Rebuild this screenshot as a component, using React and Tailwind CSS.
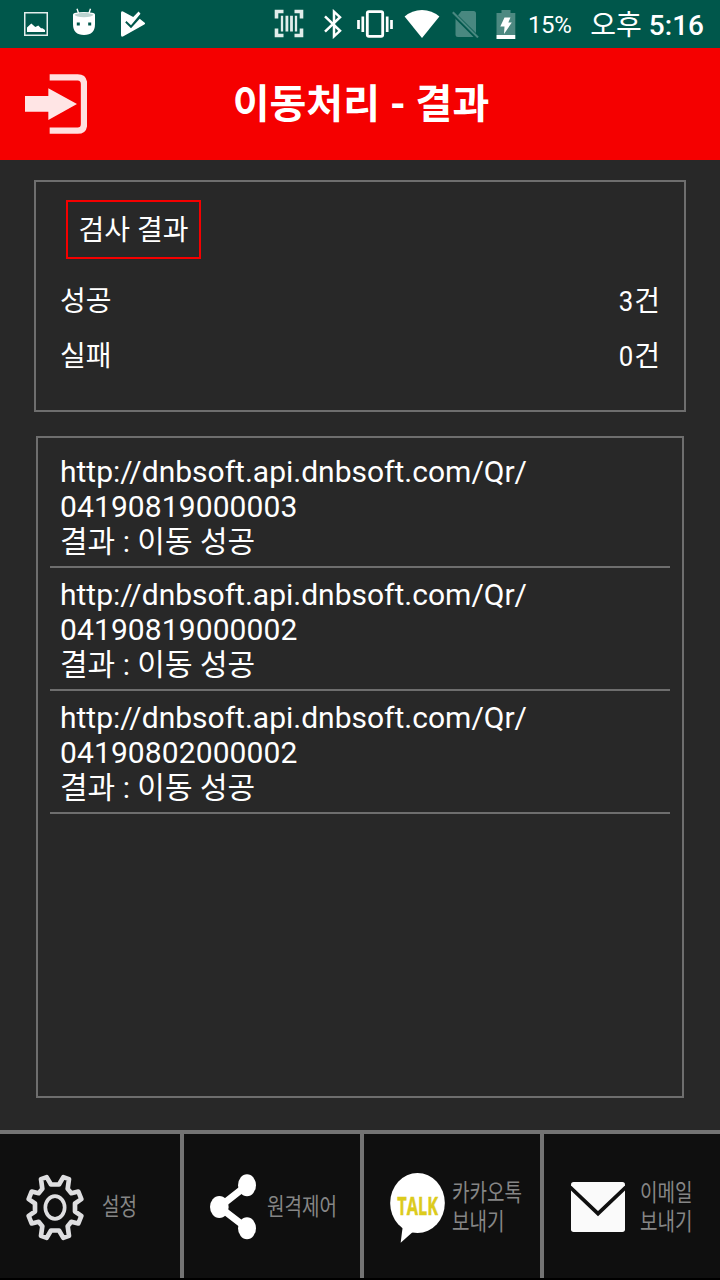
const results = [
  { url: 'http://dnbsoft.api.dnbsoft.com/Qr/', code: '04190819000003', message: '이동 성공' },
  { url: 'http://dnbsoft.api.dnbsoft.com/Qr/', code: '04190819000002', message: '이동 성공' },
  { url: 'http://dnbsoft.api.dnbsoft.com/Qr/', code: '04190802000002', message: '이동 성공' },
]

const summary = [
  { label: '성공', count: 3 },
  { label: '실패', count: 0 },
]

function StatusBar() {
  return (
    <div className="h-12 shrink-0 bg-[#00574b] text-white flex items-center">
      <svg className="ml-6 w-6 h-6 shrink-0" viewBox="0 0 24 24">
        <rect x="0.75" y="0.75" width="22.5" height="22.5" fill="none" stroke="#e3eeec" strokeWidth="1.5" />
        <path d="M3 20V15.5L7.3 11.5L11.3 15L14.3 13.4L17 16.3H18.5L21 18V20Z" fill="#fff" />
      </svg>
      <svg className="ml-6 mb-[5px] w-6 h-7 shrink-0" viewBox="0 0 24 28">
        <path d="M5 .8L6.8 6M18.5 .8L16.7 6" stroke="#fff" strokeWidth="1.4" />
        <path d="M1 7Q1 5 4 4.8Q12 3.4 20 4.8Q23 5 23 7V16Q23 27 12 27Q1 27 1 16Z" fill="#fff" />
        <path d="M2.5 6.5Q12 3 21.5 6.5Q20 9.3 12 9.3Q4 9.3 2.5 6.5Z" fill="#bcd3d0" />
        <path d="M4.8 14.4h3v3h-3zM16.2 14.4h3v3h-3z" fill="#00574b" />
      </svg>
      <svg className="ml-6 w-[26px] h-[26px] shrink-0" viewBox="0 0 26 26" fill="#fff">
        <path d="M1 2Q1 -.3 3 .6L13.2 6L18.6 .6L20.5 2.7L11 14.2L6.4 10L5.2 11.4L11 17.2L19.7 7.8L24.7 11.7Q25.6 12.6 24.3 13.6L3.4 25.3Q1 26.5 1 24Z" />
      </svg>

      <svg className="ml-[128px] w-[30px] h-[30px] shrink-0" viewBox="0 0 30 30" fill="none" stroke="#e0edea">
        <path d="M2.5 9.5V2.5H9.5M20.5 2.5H27.5V9.5M27.5 19.5V26.5H20.5M9.5 26.5H2.5V19.5" strokeWidth="3.6" />
        <path d="M8 6.8V22.5M22 6.8V22.5" strokeWidth="2.3" />
        <path d="M12.9 6.8V22.5M17.5 6.8V22.5" strokeWidth="2.8" />
      </svg>
      <svg className="ml-[20px] w-[18px] h-[30px] shrink-0" viewBox="0 0 18 30" fill="none" stroke="#fff" strokeWidth="2.5">
        <path d="M1 7.3L16 21.8L10 27.3V2.7L16 8.2L1 22.7" />
      </svg>
      <svg className="ml-[15px] w-[36px] h-[28px] shrink-0" viewBox="0 0 36 28">
        <rect x="10.3" y="1.7" width="15.4" height="24.6" rx="1.6" fill="none" stroke="#fff" strokeWidth="2.8" />
        <path d="M1.5 10V19M5.8 6.5V22M30.2 6.5V22M34.5 10V19" stroke="#fff" strokeWidth="2.7" />
      </svg>
      <svg className="ml-[11px] w-[36px] h-[28px] shrink-0" viewBox="0 0 36 28" fill="#fff">
        <path d="M18 28L.6 6.6Q8 0 18 0T35.4 6.6Z" />
      </svg>
      <svg className="ml-[12px] w-[27px] h-[28px] shrink-0" viewBox="0 0 27 28">
        <path d="M4 7.8L9.5 1H21.5Q24 1 24 3.5V24Q24 27 21 27H6Q3.5 27 3.5 24.5V8.5Z" fill="#498880" />
        <path d="M.4 2.8L25.8 28" stroke="#00574b" strokeWidth="4.5" />
        <path d="M.8 2.2L26 27.4" stroke="#498880" strokeWidth="2.1" />
      </svg>
      <svg className="ml-[17px] w-[20px] h-[29px] shrink-0" viewBox="0 0 20 29">
        <path d="M.5 3H5.5V0H14.5V3H19.3V25H.5Z" fill="#4d8981" />
        <path d="M.5 25H19.3V29H.5Z" fill="#fff" />
        <path d="M8.5 7.5H14.5L12.3 12.5H15.8L8 24L8.5 16.5H4.3Z" fill="#fff" />
      </svg>
      <span className="ml-[12px] pt-[2px] text-2xl leading-7 tracking-[-0.4px]">15%</span>
      <span className="ml-[19px] w-[120px] pt-[3px] text-[28px] leading-8 whitespace-nowrap">
        오후 <span className="font-medium">5:16</span>
      </span>
    </div>
  )
}

function ExitIcon() {
  return (
    <svg className="w-[62px] h-[60px]" viewBox="0 0 186 180">
      <path d="M0 66H70V43L156 90L70 138V113H0Z" fill="#ffe5e5" />
      <path d="M74 10H158Q177 10 177 30V150Q177 170 158 170H74" fill="none" stroke="#ffe0e0" strokeWidth="19" />
    </svg>
  )
}

function GearIcon() {
  return (
    <svg className="w-[58px] h-[67px] shrink-0" viewBox="-87 -100 174 200" fill="none" stroke="#dedee0" strokeLinejoin="round">
      <path
        strokeWidth="14"
        d="M-12-69H12L25-91L42-85L38-56L49-43L70-48L79-25L60-12V12L79 25L70 48L49 43L38 56L42 85L25 91L12 69H-12L-25 91L-42 85L-38 56L-49 43L-70 48L-79 25L-60 12V-12L-79-25L-70-48L-49-43L-38-56L-42-85L-25-91Z"
      />
      <ellipse rx="29" ry="34" strokeWidth="11" />
    </svg>
  )
}

function ShareIcon() {
  return (
    <svg className="w-[46px] h-[66px] shrink-0" viewBox="0 0 138 198" fill="#fff">
      <path d="M111 34L28 99L111 163" fill="none" stroke="#fff" strokeWidth="21" />
      <ellipse cx="111" cy="34" rx="27" ry="33" />
      <ellipse cx="28" cy="99" rx="28" ry="33" />
      <ellipse cx="111" cy="163" rx="27" ry="33" />
    </svg>
  )
}

function TalkIcon() {
  return (
    <svg className="w-[55px] h-[70px] mt-[2px] shrink-0 overflow-visible" viewBox="0 0 165 210">
      <ellipse cx="82.5" cy="90" rx="82" ry="90" fill="#fff" />
      <path d="M38 162L32 209L69 176Z" fill="#fff" />
      <text
        x="22"
        y="126"
        textLength="122"
        lengthAdjust="spacingAndGlyphs"
        className="font-['Open_Sans',sans-serif] font-bold text-[76px]"
        fill="#dccb1c"
        stroke="#dccb1c"
        strokeWidth="1.5"
      >
        TALK
      </text>
    </svg>
  )
}

function MailIcon() {
  return (
    <svg className="w-[54px] h-[50px] shrink-0" viewBox="0 0 162 150">
      <rect width="162" height="150" rx="8" fill="#fafafa" />
      <path d="M-3 15L81 95L165 15" fill="none" stroke="#0f0f0f" strokeWidth="11" />
    </svg>
  )
}

// Labels are condensed horizontally, so the text box is scaled on the x axis
function MenuLabel({ children }) {
  return (
    <span className="w-0 origin-left scale-x-[0.81] whitespace-nowrap pt-px text-[23.5px] leading-[28.5px] text-[#868686]">
      {children}
    </span>
  )
}

function BottomMenu() {
  return (
    <div className="h-[150px] shrink-0 border-t-4 border-b-2 border-t-[#747474] border-b-black bg-[#0f0f0f] grid grid-cols-4">
      <button className="flex items-center pt-[2px] pl-[26px] gap-[18px]">
        <GearIcon />
        <MenuLabel>설정</MenuLabel>
      </button>
      <button className="flex items-center border-l-4 border-[#747474] pt-[2px] pl-[26px] gap-[11px]">
        <ShareIcon />
        <MenuLabel>원격제어</MenuLabel>
      </button>
      <button className="flex items-center border-l-4 border-[#747474] pt-[2px] pl-[26px] gap-[7px] text-left">
        <TalkIcon />
        <MenuLabel>
          카카오톡
          <br />
          보내기
        </MenuLabel>
      </button>
      <button className="flex items-center border-l-4 border-[#747474] pt-[2px] pl-[27px] gap-[15px] text-left">
        <MailIcon />
        <MenuLabel>
          이메일
          <br />
          보내기
        </MenuLabel>
      </button>
    </div>
  )
}

export default function App() {
  return (
    <div className="w-[720px] h-[1280px] overflow-hidden flex flex-col bg-[#282828] text-white font-['Roboto','Noto_Sans_CJK_KR',sans-serif]">
      <StatusBar />

      <header className="h-28 shrink-0 bg-[#f50000] grid grid-cols-[1fr_auto_1fr] items-center">
        <button className="pl-[25px]">
          <ExitIcon />
        </button>
        <h1 className="pt-[2px] pl-[2px] text-[40px] leading-[48px] font-bold">이동처리 - 결과</h1>
      </header>

      <main className="flex-1 flex flex-col pt-5 pb-8">
        <section className="mx-[34px] h-[232px] shrink-0 border-2 border-[#6e6e6e] px-6 pt-[18px]">
          <h2 className="ml-[6px] w-[135px] h-[59px] border-2 border-[#f50000] pt-[2px] flex items-center justify-center text-[28px] leading-8">
            검사 결과
          </h2>
          <div className="mt-[15px]">
            {summary.map((item) => (
              <div key={item.label} className="h-[55px] flex items-center justify-between text-[28px] leading-8">
                <span>{item.label}</span>
                <span>
                  <span className="inline-block scale-x-[0.92]">{item.count}</span>건
                </span>
              </div>
            ))}
          </div>
        </section>

        <section className="mx-9 mt-6 flex-1 border-2 border-[#6e6e6e] px-3 pt-[7px]">
          {results.map((item) => (
            <div key={item.code} className="h-[123px] border-b-2 border-[#6e6e6e] px-[10px] pt-[9px] text-[30px] leading-[35px]">
              <p>{item.url}</p>
              <p className="tracking-[0.1px]">{item.code}</p>
              <p>결과 : {item.message}</p>
            </div>
          ))}
        </section>
      </main>

      <BottomMenu />
    </div>
  )
}
